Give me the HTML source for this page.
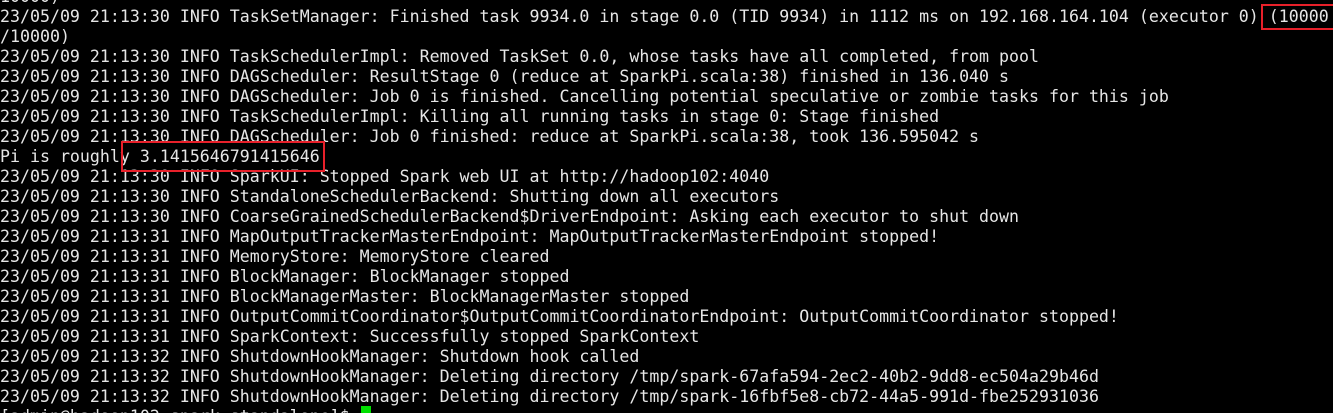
<!DOCTYPE html>
<html><head><meta charset="utf-8"><style>
html,body{margin:0;padding:0;background:#000;width:1333px;height:413px;overflow:hidden;position:relative}
pre{margin:0;position:absolute;left:0;top:-13px;font-family:"DejaVu Sans Mono","Liberation Mono",monospace;font-size:16.6px;line-height:20px;color:#e6e6e6;white-space:pre}
.box{position:absolute;border:2px solid #e8202a;box-sizing:border-box}
.cur{position:absolute;left:361px;top:406px;width:10px;height:10px;background:#00e000}
</style></head><body>
<pre>10000)
23/05/09 21:13:30 INFO TaskSetManager: Finished task 9934.0 in stage 0.0 (TID 9934) in 1112 ms on 192.168.164.104 (executor 0) (10000
/10000)
23/05/09 21:13:30 INFO TaskSchedulerImpl: Removed TaskSet 0.0, whose tasks have all completed, from pool
23/05/09 21:13:30 INFO DAGScheduler: ResultStage 0 (reduce at SparkPi.scala:38) finished in 136.040 s
23/05/09 21:13:30 INFO DAGScheduler: Job 0 is finished. Cancelling potential speculative or zombie tasks for this job
23/05/09 21:13:30 INFO TaskSchedulerImpl: Killing all running tasks in stage 0: Stage finished
23/05/09 21:13:30 INFO DAGScheduler: Job 0 finished: reduce at SparkPi.scala:38, took 136.595042 s
Pi is roughly 3.1415646791415646
23/05/09 21:13:30 INFO SparkUI: Stopped Spark web UI at http://hadoop102:4040
23/05/09 21:13:30 INFO StandaloneSchedulerBackend: Shutting down all executors
23/05/09 21:13:30 INFO CoarseGrainedSchedulerBackend$DriverEndpoint: Asking each executor to shut down
23/05/09 21:13:31 INFO MapOutputTrackerMasterEndpoint: MapOutputTrackerMasterEndpoint stopped!
23/05/09 21:13:31 INFO MemoryStore: MemoryStore cleared
23/05/09 21:13:31 INFO BlockManager: BlockManager stopped
23/05/09 21:13:31 INFO BlockManagerMaster: BlockManagerMaster stopped
23/05/09 21:13:31 INFO OutputCommitCoordinator$OutputCommitCoordinatorEndpoint: OutputCommitCoordinator stopped!
23/05/09 21:13:31 INFO SparkContext: Successfully stopped SparkContext
23/05/09 21:13:32 INFO ShutdownHookManager: Shutdown hook called
23/05/09 21:13:32 INFO ShutdownHookManager: Deleting directory /tmp/spark-67afa594-2ec2-40b2-9dd8-ec504a29b46d
23/05/09 21:13:32 INFO ShutdownHookManager: Deleting directory /tmp/spark-16fbf5e8-cb72-44a5-991d-fbe252931036
[admin@hadoop102 spark-standalone]$ </pre>
<div class="box" style="left:1261px;top:4px;width:76px;height:26px"></div>
<div class="box" style="left:121px;top:141px;width:204px;height:31px"></div>
<div class="cur"></div>
</body></html>
